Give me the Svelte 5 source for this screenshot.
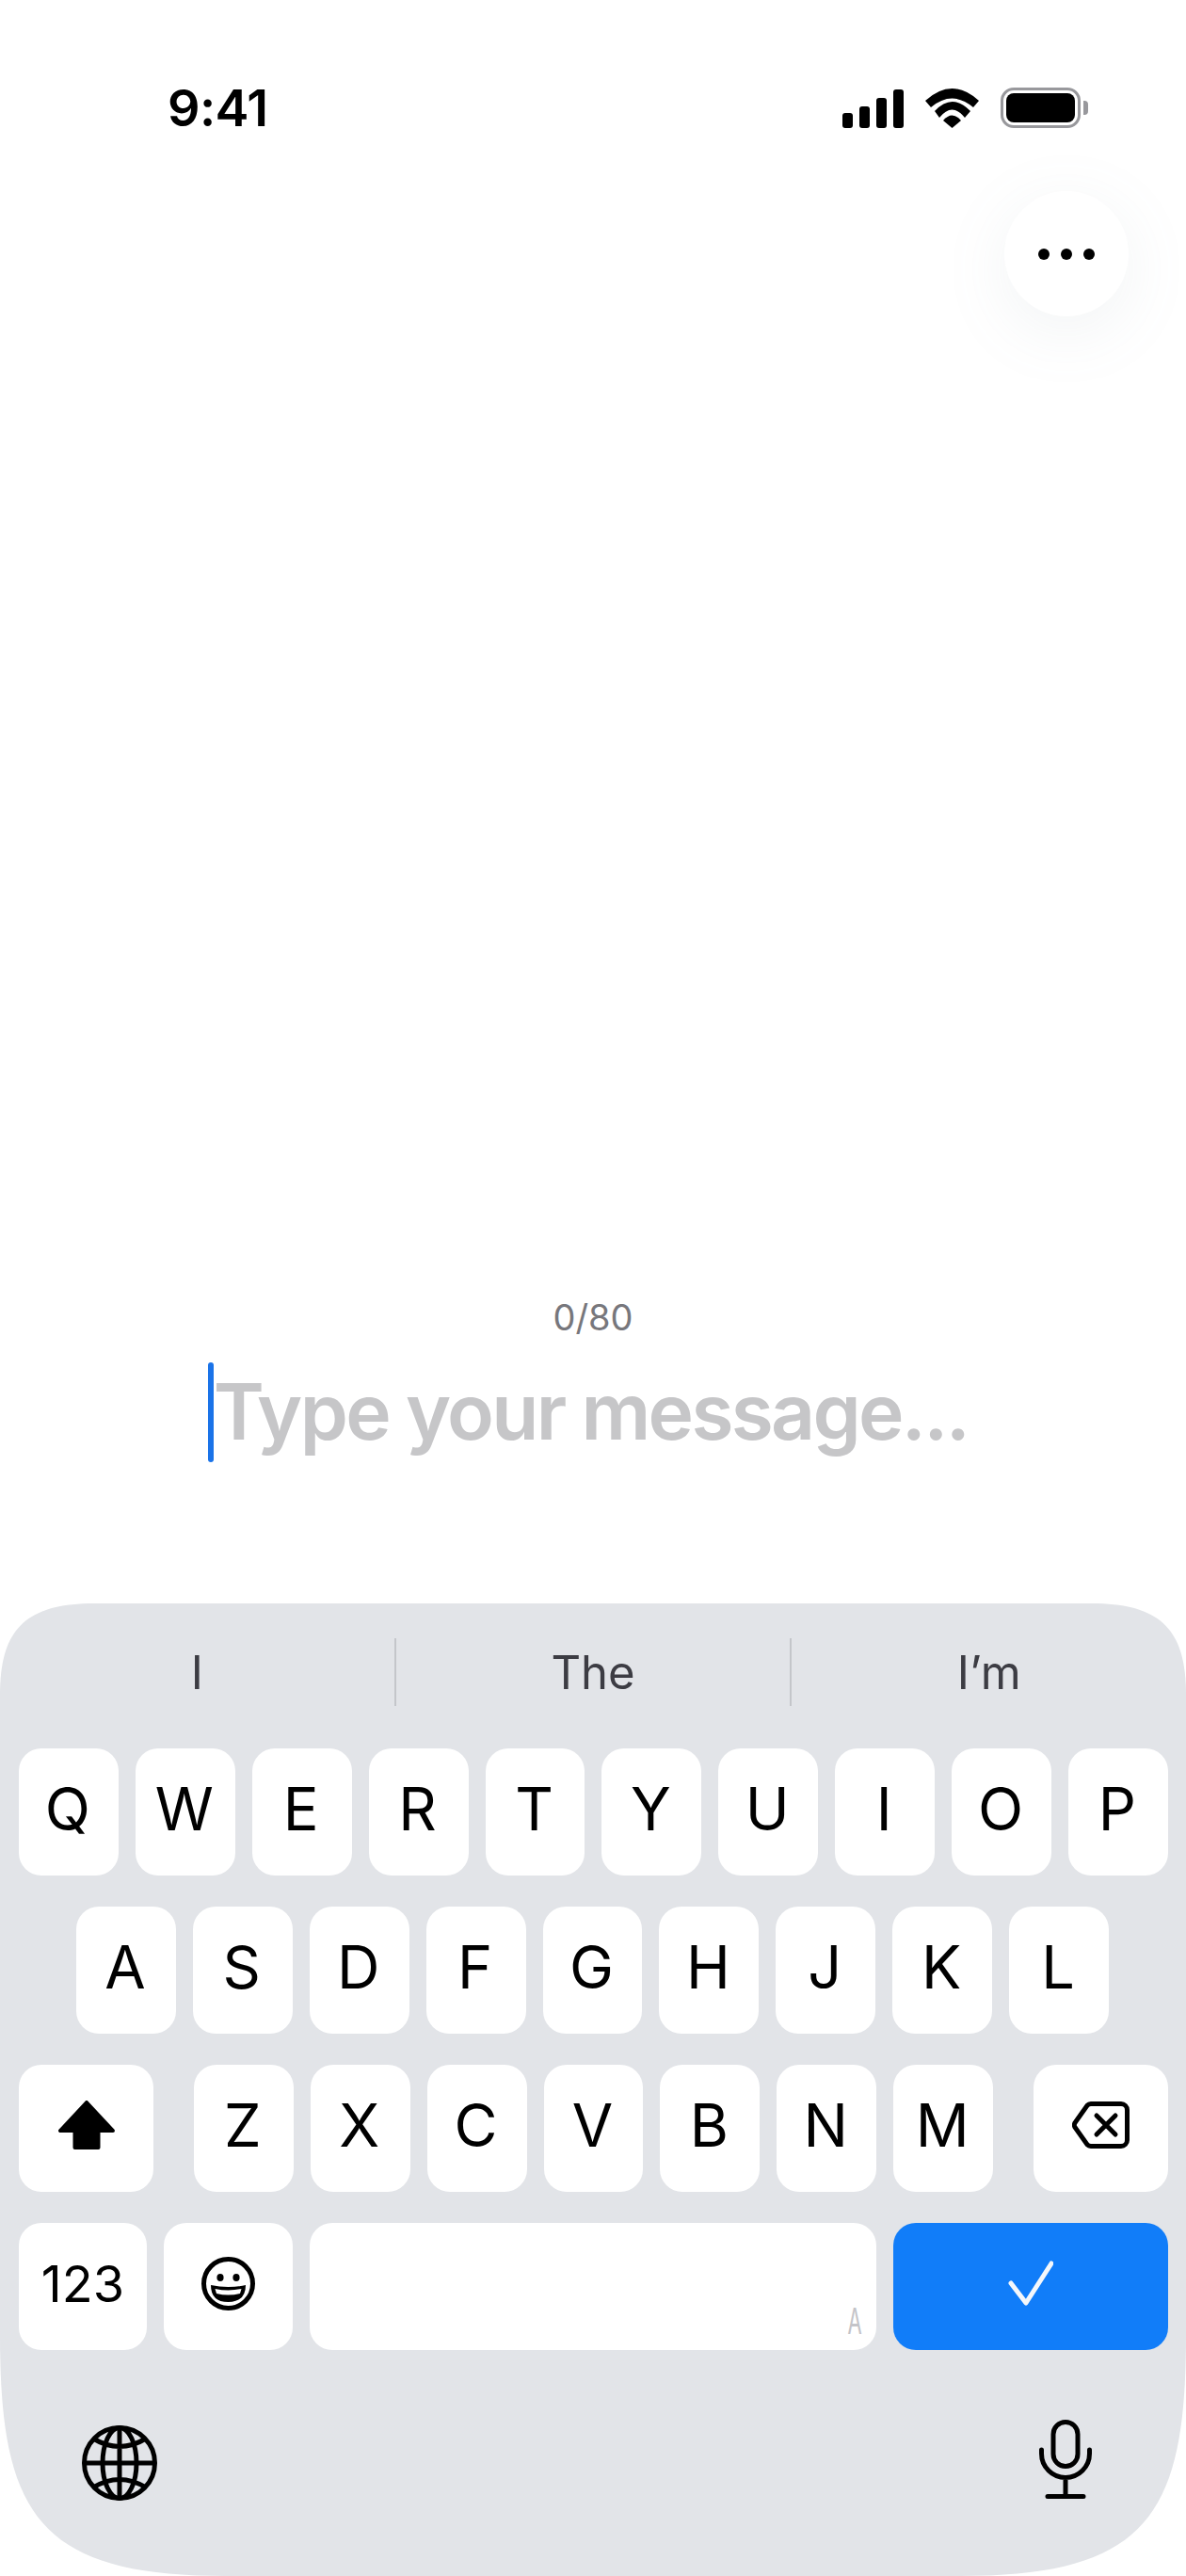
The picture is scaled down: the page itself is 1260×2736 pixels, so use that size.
<script>
  const row1 = ['Q', 'W', 'E', 'R', 'T', 'Y', 'U', 'I', 'O', 'P'];
  const row2 = ['A', 'S', 'D', 'F', 'G', 'H', 'J', 'K', 'L'];
  const row3 = ['Z', 'X', 'C', 'V', 'B', 'N', 'M'];
  const suggestions = ['I', 'The', 'I’m'];
</script>

<div class="screen">
  <div class="status">
    <span class="time">9:41</span>
    <div class="status-icons">
      <div class="signal">
        <i style="height:16px"></i>
        <i style="height:23px"></i>
        <i style="height:32px"></i>
        <i style="height:41px"></i>
      </div>
      <svg class="wifi" width="57" height="42" viewBox="0 0 57 42">
        <path d="M0 13Q28.5-13 57 13L51 20Q28.5 1 6 20Z" />
        <path d="M10 24Q28.5 4 48 24L42 31Q28.5 14 15 31Z" />
        <path d="M19 34Q28.5 23 38 34L28.5 42Z" />
      </svg>
      <div class="battery"><div class="level"></div></div>
      <div class="nub"></div>
    </div>
  </div>

  <div class="top-actions">
    <button class="menu" aria-label="More">
      <i></i><i></i><i></i>
    </button>
  </div>

  <div class="composer">
    <div class="counter">0/80</div>
    <div class="input">
      <span class="caret"></span>
      <span class="placeholder">Type your message...</span>
    </div>
  </div>

  <div class="keyboard">
    <div class="suggestions">
      {#each suggestions as word}
        <div class="suggestion">{word}</div>
      {/each}
    </div>

    <div class="keys">
      <div class="row">
        {#each row1 as k}<div class="key">{k}</div>{/each}
      </div>
      <div class="row center">
        {#each row2 as k}<div class="key">{k}</div>{/each}
      </div>
      <div class="row between">
        <div class="key wide">
          <svg width="60" height="52" viewBox="0 0 60 52">
            <path d="M30 2L2 32H17.5V50H42.5V32H58Z" fill="#000" stroke="#000" stroke-width="4" stroke-linejoin="round" />
          </svg>
        </div>
        <div class="letters">
          {#each row3 as k}<div class="key">{k}</div>{/each}
        </div>
        <div class="key wide">
          <svg width="61" height="50" viewBox="0 0 61 50" fill="none" stroke="#000" stroke-width="5" stroke-linecap="round">
            <path d="M20 2.5H52a6.5 6.5 0 0 1 6.5 6.5V41a6.5 6.5 0 0 1-6.5 6.5H20a6 6 0 0 1-4-1.8L3.5 28a4.5 4.5 0 0 1 0-6L16 4.3a6 6 0 0 1 4-1.8Z" />
            <path d="M26 15L46 35M46 15L26 35" />
          </svg>
        </div>
      </div>
      <div class="row">
        <div class="key num">123</div>
        <div class="key emoji">
          <svg width="57" height="57" viewBox="0 0 57 57">
            <circle cx="28.5" cy="28.5" r="26" fill="none" stroke="#000" stroke-width="5" />
            <ellipse cx="20" cy="22" rx="3.6" ry="4" />
            <ellipse cx="37" cy="22" rx="3.6" ry="4" />
            <path d="M10 30Q28.5 34 47 30Q47 48 28.5 48Q10 48 10 30Z" />
            <path d="M14.5 34Q28.5 37 42.5 34L41 39Q28.5 42 16 39Z" fill="#fff" />
          </svg>
        </div>
        <div class="key space"><span class="space-a">A</span></div>
        <div class="key done">
          <svg width="48" height="48" viewBox="0 0 48 48" fill="none" stroke="#f4f7fb" stroke-width="5" stroke-linecap="round" stroke-linejoin="round">
            <path d="M3 24L19 45L46 3" />
          </svg>
        </div>
      </div>
    </div>

    <div class="bottom">
      <svg width="80" height="80" viewBox="0 0 80 80" fill="none" stroke="#000" stroke-width="5">
        <circle cx="40" cy="40" r="37.5" />
        <ellipse cx="40" cy="40" rx="18" ry="37.5" />
        <path d="M40 3V77M3 40H77M12 14Q40 31 68 14M12 66Q40 49 68 66" />
      </svg>
      <svg class="mic" width="56" height="84" viewBox="0 0 56 84" fill="none" stroke="#000" stroke-width="5" stroke-linecap="round">
        <rect x="15" y="2.5" width="26" height="47" rx="13" />
        <path d="M2.5 32V36a25.5 25.5 0 0 0 51 0V32M28 62V81M9 81.5H47" />
      </svg>
    </div>
  </div>
</div>

<style>
  :global(body) {
    margin: 0;
    background: #fff;
  }

  .screen {
    width: 1260px;
    height: 2736px;
    display: flex;
    flex-direction: column;
    background: #fff;
    font-family: Inter, "Liberation Sans", sans-serif;
    overflow: hidden;
  }

  .status {
    height: 43px;
    padding: 0 104px 0 178px;
    margin-top: 93px;
    margin-bottom: 67px;
    display: flex;
    justify-content: space-between;
    align-items: flex-start;
  }

  .time {
    font-size: 54px;
    font-weight: 600;
    line-height: 43px;
    letter-spacing: -0.6px;
    color: #000;
  }

  .status-icons {
    display: flex;
    align-items: flex-end;
    height: 43px;
  }

  .signal {
    display: flex;
    align-items: flex-end;
    gap: 7px;
    margin-right: 23px;
  }

  .signal i {
    display: block;
    width: 11px;
    background: #000;
    border-radius: 3px;
  }

  .wifi {
    margin-right: 23px;
  }

  .battery {
    box-sizing: border-box;
    width: 85px;
    height: 43px;
    border: 3px solid #98989c;
    border-radius: 14px;
    padding: 3px;
  }

  .level {
    height: 100%;
    background: #000;
    border-radius: 8px;
  }

  .nub {
    width: 5px;
    height: 15px;
    margin: 0 0 14px 3px;
    background: #98989c;
    border-radius: 0 4px 4px 0;
  }

  .top-actions {
    height: 133px;
    padding-right: 61px;
    display: flex;
    justify-content: flex-end;
  }

  .menu {
    width: 132px;
    height: 133px;
    border: 0;
    padding: 0;
    border-radius: 50%;
    background: #fff;
    box-shadow: 0 16px 70px rgba(130, 145, 160, 0.1);
    display: flex;
    align-items: center;
    justify-content: center;
    gap: 12px;
  }

  .menu i {
    display: block;
    width: 12px;
    height: 12px;
    border-radius: 50%;
    background: #000;
  }

  .composer {
    flex: 1;
    display: flex;
    flex-direction: column;
    align-items: center;
    padding-top: 1040px;
  }

  .counter {
    font-size: 38px;
    line-height: 46px;
    color: #77777c;
  }

  .input {
    margin-top: 25px;
    padding-right: 11px;
    display: flex;
    align-items: center;
    height: 106px;
  }

  .caret {
    flex: none;
    width: 6px;
    height: 106px;
    border-radius: 3px;
    background: #1a73e8;
  }

  .placeholder {
    font-size: 82px;
    font-weight: 600;
    letter-spacing: -2.7px;
    line-height: 106px;
    color: #c6c6c8;
    white-space: nowrap;
  }

  .keyboard {
    height: 1033px;
    flex: none;
    background: #e2e4e8;
    clip-path: path("M0 97C0 30 25 0 100 0H1160C1235 0 1260 30 1260 97V777C1260 967 1220 1033 1020 1033H240C40 1033 0 967 0 777Z");
  }

  .suggestions {
    height: 154px;
    display: flex;
    padding-top: 37px;
    box-sizing: border-box;
  }

  .suggestion {
    flex: 1;
    height: 72px;
    display: flex;
    align-items: center;
    justify-content: center;
    font-size: 49px;
    color: #3c3c43;
  }

  .suggestion + .suggestion {
    border-left: 2px solid #c4c6ca;
  }

  .keys {
    padding: 0 19px 0 20px;
    display: flex;
    flex-direction: column;
    gap: 33px;
  }

  .row {
    display: flex;
    gap: 18px;
  }

  .center {
    justify-content: center;
    padding-right: 2px;
  }

  .between {
    justify-content: space-between;
  }

  .letters {
    display: flex;
    gap: 18px;
  }

  .key {
    position: relative;
    box-sizing: border-box;
    width: 105.9px;
    height: 135px;
    padding: 0 2px 7px 0;
    flex: none;
    display: flex;
    align-items: center;
    justify-content: center;
    background: #fff;
    border-radius: 24px;
    font-size: 63px;
    color: #000;
  }

  .wide {
    width: 143px;
    padding-right: 0;
  }

  .num {
    width: 136px;
    padding-right: 0;
    font-size: 54px;
  }

  .emoji {
    width: 137px;
    padding-right: 0;
  }

  .space {
    width: 602px;
  }

  .space-a {
    position: absolute;
    right: 10px;
    bottom: 12px;
    font-size: 38px;
    line-height: 38px;
    color: #c4c4c8;
    transform: scaleX(0.58);
  }

  .done {
    width: 292px;
    padding-right: 0;
    background: #117df9;
  }

  .bottom {
    margin-top: 74px;
    padding: 0 100px 0 87px;
    display: flex;
    justify-content: space-between;
    align-items: center;
  }

  .mic {
    margin-bottom: 8px;
  }
</style>
